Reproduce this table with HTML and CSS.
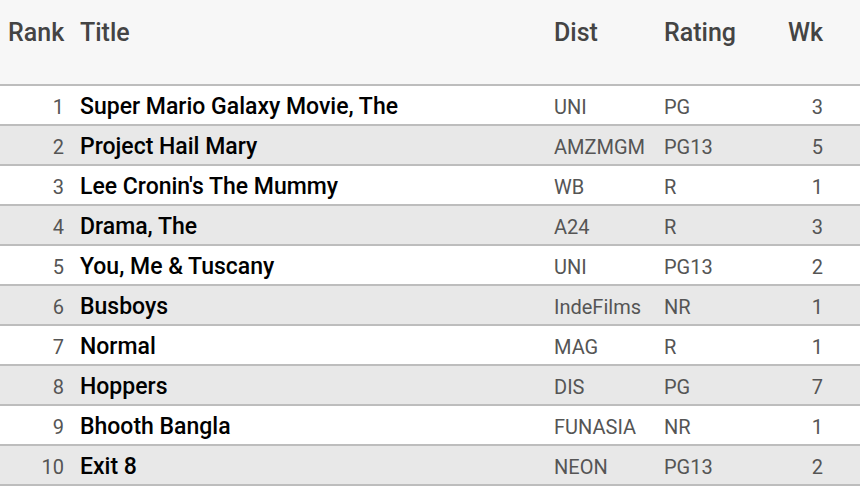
FILE: index.html
```html
<!DOCTYPE html>
<html>
<head>
<meta charset="utf-8">
<link rel="stylesheet" href="styles.css">
</head>
<body>
<table class="chart">
  <colgroup>
    <col class="c-rank"><col class="c-title"><col class="c-dist"><col class="c-rating"><col class="c-wk">
  </colgroup>
  <thead>
    <tr>
      <th class="num">Rank</th>
      <th>Title</th>
      <th>Dist</th>
      <th>Rating</th>
      <th class="num wk">Wk</th>
    </tr>
  </thead>
  <tbody>
    <tr><td class="num">1</td><td class="title">Super Mario Galaxy Movie, The</td><td>UNI</td><td>PG</td><td class="num wk">3</td></tr>
    <tr><td class="num">2</td><td class="title">Project Hail Mary</td><td>AMZMGM</td><td>PG13</td><td class="num wk">5</td></tr>
    <tr><td class="num">3</td><td class="title">Lee Cronin's The Mummy</td><td>WB</td><td>R</td><td class="num wk">1</td></tr>
    <tr><td class="num">4</td><td class="title">Drama, The</td><td>A24</td><td>R</td><td class="num wk">3</td></tr>
    <tr><td class="num">5</td><td class="title">You, Me &amp; Tuscany</td><td>UNI</td><td>PG13</td><td class="num wk">2</td></tr>
    <tr><td class="num">6</td><td class="title">Busboys</td><td>IndeFilms</td><td>NR</td><td class="num wk">1</td></tr>
    <tr><td class="num">7</td><td class="title">Normal</td><td>MAG</td><td>R</td><td class="num wk">1</td></tr>
    <tr><td class="num">8</td><td class="title">Hoppers</td><td>DIS</td><td>PG</td><td class="num wk">7</td></tr>
    <tr><td class="num">9</td><td class="title">Bhooth Bangla</td><td>FUNASIA</td><td>NR</td><td class="num wk">1</td></tr>
    <tr><td class="num">10</td><td class="title">Exit 8</td><td>NEON</td><td>PG13</td><td class="num wk">2</td></tr>
  </tbody>
</table>
</body>
</html>
```

FILE: styles.css
```css
html, body {
  margin: 0;
  padding: 0;
  background: #ffffff;
}

body {
  font-family: Roboto, "Liberation Sans", Arial, sans-serif;
  color: #555555;
}

.chart {
  width: 860px;
  border-collapse: collapse;
  table-layout: fixed;
}

.c-rank { width: 72px; }
.c-title { width: 474px; }
.c-dist { width: 110px; }
.c-rating { width: 114px; }
.c-wk { width: 90px; }

.chart thead th {
  height: 85px;
  box-sizing: border-box;
  background: #f7f7f7;
  color: #444444;
  font-size: 25px;
  font-weight: 500;
  text-align: left;
  vertical-align: top;
  padding: 18px 8px 0 8px;
  line-height: 29px;
  border-bottom: 2px solid #bdbdbd;
}

.chart th.num,
.chart td.num {
  text-align: right;
}

.chart .wk,
.chart thead th.wk {
  padding-right: 37px;
}

.chart tbody td {
  box-sizing: content-box;
  padding: 4px 8px 0 8px;
  height: 34px;
  font-size: 20px;
  line-height: 24px;
  color: #555555;
  border-bottom: 2px solid #bdbdbd;
  vertical-align: middle;
  white-space: nowrap;
}

.chart tbody tr:nth-child(even) td {
  background: #e8e8e8;
}

.chart tbody td.title {
  font-size: 23px;
  font-weight: 500;
  color: #000000;
}
```
